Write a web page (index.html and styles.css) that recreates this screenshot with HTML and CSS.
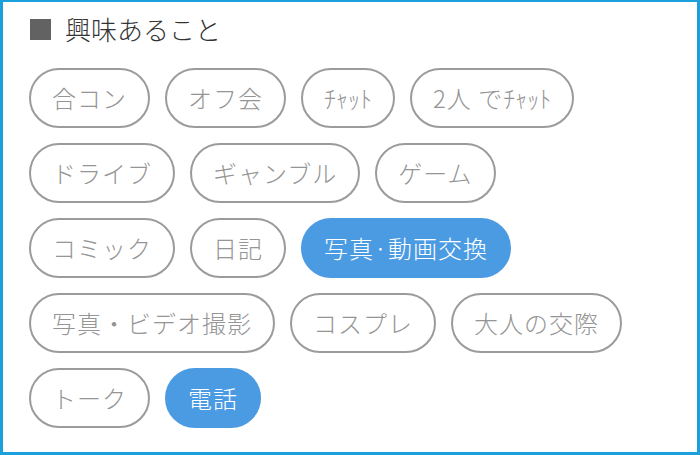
FILE: index.html
```
<!DOCTYPE html>
<html lang="ja">
<head>
<meta charset="utf-8">
<link rel="stylesheet" href="styles.css">
</head>
<body>
<div class="panel">
  <h2 class="heading"><span class="square"></span>興味あること</h2>
  <div class="tags">
    <div class="row">
      <span class="tag">合コン</span>
      <span class="tag">オフ会</span>
      <span class="tag"><span class="hw">ﾁｬｯﾄ</span></span>
      <span class="tag">2人 で<span class="hw">ﾁｬｯﾄ</span></span>
    </div>
    <div class="row">
      <span class="tag">ドライブ</span>
      <span class="tag">ギャンブル</span>
      <span class="tag">ゲーム</span>
    </div>
    <div class="row">
      <span class="tag">コミック</span>
      <span class="tag">日記</span>
      <span class="tag active">写真·動画交換</span>
    </div>
    <div class="row">
      <span class="tag">写真・ビデオ撮影</span>
      <span class="tag">コスプレ</span>
      <span class="tag">大人の交際</span>
    </div>
    <div class="row">
      <span class="tag">トーク</span>
      <span class="tag active">電話</span>
    </div>
  </div>
</div>
</body>
</html>
```
FILE: styles.css
```
html, body {
  margin: 0;
  padding: 0;
  background: #fff;
}
body {
  font-family: "Noto Sans CJK JP", "Noto Sans", sans-serif;
}
.panel {
  box-sizing: border-box;
  width: 700px;
  height: 455px;
  border-style: solid;
  border-color: #1ba0dc;
  border-width: 2px 3px 3px 3px;
  padding: 12px 20px 0 26px;
  background: #fff;
}
.heading {
  display: flex;
  align-items: center;
  gap: 14px;
  margin: 0;
  font-size: 26px;
  font-weight: 300;
  line-height: 30px;
  color: #333;
  padding-left: 1px;
}
.square {
  display: block;
  width: 21px;
  height: 21px;
  background: #626262;
}
.tags {
  display: flex;
  flex-direction: column;
  gap: 15px;
  margin-top: 24px;
}
.row {
  display: flex;
  gap: 15px;
}
.tag {
  display: block;
  box-sizing: border-box;
  height: 60px;
  line-height: 56px;
  padding: 0 21px;
  border: 2px solid #9b9b9b;
  border-radius: 30px;
  font-size: 24px;
  font-weight: 300;
  letter-spacing: 1px;
  color: #959595;
  white-space: nowrap;
}
.hw {
  letter-spacing: 0;
}
.tag.active {
  background: #4b9be3;
  border-color: #4b9be3;
  color: #fff;
}
```
